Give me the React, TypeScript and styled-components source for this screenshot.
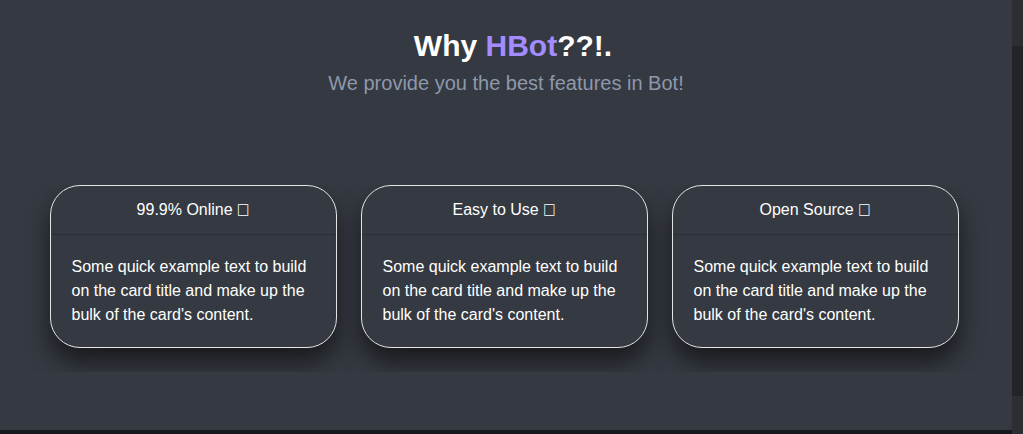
import React from "react";
import styled, { createGlobalStyle } from "styled-components";

const GlobalStyle = createGlobalStyle`
  html, body {
    margin: 0;
    padding: 0;
    background: #353941;
    overflow: hidden;
  }
  body {
    font-family: "Liberation Sans", Arial, sans-serif;
  }
`;

const Frame = styled.div`
  display: flex;
  width: 1023px;
  height: 434px;
  background: #353941;
`;

const Page = styled.div`
  flex: 1;
  display: flex;
  flex-direction: column;
`;

const Main = styled.main`
  flex: 1;
  display: flex;
  flex-direction: column;
  align-items: center;
  padding-top: 29px;
`;

const BottomEdge = styled.div`
  height: 4px;
  background: #15191d;
`;

const Scrollbar = styled.div`
  width: 11px;
  display: flex;
  flex-direction: column;
  background: #2c2e32;
  padding-top: 46px;
`;

const Thumb = styled.div`
  height: 350px;
  background: #222428;
  border-radius: 2px 0 0 2px;
`;

const Title = styled.h1`
  margin: 0 0 0 14px;
  font-size: 30px;
  line-height: 34px;
  font-weight: 700;
  color: #ffffff;
`;

const Accent = styled.span`
  color: #a28cff;
`;

const Subtitle = styled.p`
  margin: 8px 0 0;
  font-size: 20px;
  line-height: 24px;
  color: #8e98ab;
`;

const CardRow = styled.section`
  align-self: stretch;
  display: flex;
  justify-content: center;
  gap: 24px;
  margin-top: 90px;
  padding: 0 4px 24px 0;
  overflow: hidden;
`;

const Card = styled.article`
  width: 287px;
  box-sizing: border-box;
  border: 1px solid #e4e4e4;
  border-radius: 30px;
  background: #353941;
  box-shadow: 0 14px 24px rgba(0, 0, 0, 0.55);
  color: #ffffff;
  overflow: hidden;
`;

const CardHeader = styled.header`
  padding: 12px 16px;
  font-size: 16px;
  line-height: 24px;
  text-align: center;
  border-bottom: 1px solid #2b2f35;
`;

const Tofu = styled.span`
  display: inline-block;
  font-family: "DejaVu Sans", sans-serif;
  font-size: 13px;
  line-height: 0;
  transform: translateY(-2px) scaleY(1.15);
`;

const CardBody = styled.p`
  margin: 0;
  padding: 20px 20px 20px 21px;
  font-size: 16px;
  line-height: 24px;
`;

const cards = ["99.9% Online", "Easy to Use", "Open Source"];

export default function App() {
  return (
    <>
      <GlobalStyle />
      <Frame>
        <Page>
          <Main>
            <Title>
              Why <Accent>HBot</Accent>??!.
            </Title>
            <Subtitle>We provide you the best features in Bot!</Subtitle>
            <CardRow>
              {cards.map((t) => (
                <Card key={t}>
                  <CardHeader>
                    {t} <Tofu>□</Tofu>
                  </CardHeader>
                  <CardBody>
                    Some quick example text to build on the card title and make up the
                    bulk of the card's content.
                  </CardBody>
                </Card>
              ))}
            </CardRow>
          </Main>
          <BottomEdge />
        </Page>
        <Scrollbar>
          <Thumb />
        </Scrollbar>
      </Frame>
    </>
  );
}
